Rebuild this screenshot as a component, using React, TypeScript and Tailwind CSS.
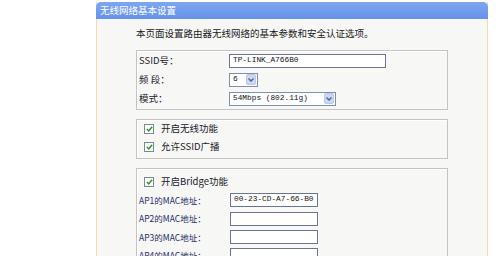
const cjk = { fontFamily: '"Noto Sans CJK SC", "Liberation Sans", sans-serif' };
const mono = { fontFamily: '"Liberation Mono", "Noto Sans CJK SC", monospace' };

function Arrow() {
  return (
    <span className="ml-auto flex h-[11px] w-[10px] items-center justify-center rounded-[2px] border border-[#b7c8ea] bg-[#c9d8f5]">
      <svg width="6" height="4" viewBox="0 0 6 4">
        <path d="M0.5 0.5 L3 3 L5.5 0.5" fill="none" stroke="#4d6185" strokeWidth="1.3" />
      </svg>
    </span>
  );
}

function Select({ value, width }: { value: string; width: string }) {
  return (
    <div className={`flex h-[14px] items-center border border-[#7f8fb0] bg-white pl-[3px] pr-[1px] ${width}`}>
      <span className="text-[7.8px] leading-none text-[#111]" style={mono}>
        {value}
      </span>
      <Arrow />
    </div>
  );
}

function TextInput({ value, width }: { value?: string; width: string }) {
  return (
    <div className={`flex h-[14px] items-center border border-[#6b7494] bg-white pl-[3px] ${width}`}>
      <span className="text-[7.8px] leading-none text-[#111]" style={mono}>
        {value}
      </span>
    </div>
  );
}

function Check({ label }: { label: string }) {
  return (
    <div className="flex h-[18px] items-center pl-[7px]">
      <span className="flex h-[10px] w-[10px] items-center justify-center border border-[#7a8a90] bg-white">
        <svg width="7" height="6" viewBox="0 0 7 6">
          <path d="M0.8 3 L2.7 4.8 L6.2 0.8" fill="none" stroke="#2f9a2f" strokeWidth="1.5" />
        </svg>
      </span>
      <span className="ml-[7px] text-[9.5px] leading-none text-[#1a1a2a]" style={cjk}>
        {label}
      </span>
    </div>
  );
}

function Row({ label, h, children }: { label: string; h: string; children: React.ReactNode }) {
  return (
    <div className={`flex items-center pl-[2px] ${h}`}>
      <span className="w-[90px] text-[9.5px] leading-none text-[#1a1a2a]" style={cjk}>
        {label}
      </span>
      {children}
    </div>
  );
}

function MacRow({ label, h, value }: { label: string; h: string; value?: string }) {
  return (
    <div className={`flex items-center pl-[2px] ${h}`}>
      <span className="w-[91px] text-[8.5px] leading-none text-[#1e2d66]" style={cjk}>
        {label}
      </span>
      <TextInput value={value} width="w-[88px]" />
    </div>
  );
}

export default function App() {
  return (
    <div className="h-[256px] w-[500px] overflow-hidden bg-white">
      <div className="ml-[96px] mt-[2px] h-[300px] w-[392px] border-x border-[#ecdcae] bg-[#f7f7f5]">
        <div className="-mx-px flex h-[17px] items-center rounded-t-[5px] bg-gradient-to-b from-[#7ea6ef] to-[#6592ea] pl-[4px]">
          <span className="text-[9.5px] leading-none text-white" style={cjk}>
            无线网络基本设置
          </span>
        </div>
        <div className="pl-[39px]">
          <div className="mt-[8px] h-[12px] text-[9.5px] leading-[12px] text-[#1a1a1a]" style={cjk}>
            本页面设置路由器无线网络的基本参数和安全认证选项。
          </div>

          <div className="mt-[11px] w-[312px] border border-[#c4c4c4] py-[1px] shadow-[inset_1px_1px_0_#ffffff]">
            <Row label="SSID号：" h="h-[18px]">
              <TextInput value="TP-LINK_A766B0" width="w-[157px]" />
            </Row>
            <Row label="频 段：" h="h-[19px]">
              <Select value="6" width="w-[29px]" />
            </Row>
            <Row label="模式：" h="h-[19px]">
              <Select value="54Mbps (802.11g)" width="w-[107px]" />
            </Row>
          </div>

          <div className="mt-[9px] w-[312px] border border-[#c4c4c4] pb-[2px] shadow-[inset_1px_1px_0_#ffffff]">
            <Check label="开启无线功能" />
            <Check label="允许SSID广播" />
          </div>

          <div className="mt-[9px] w-[312px] border border-[#c4c4c4] pt-[4px] shadow-[inset_1px_1px_0_#ffffff]">
            <Check label="开启Bridge功能" />
            <MacRow label="AP1的MAC地址：" h="h-[18px]" value="00-23-CD-A7-66-B0" />
            <MacRow label="AP2的MAC地址：" h="h-[19px]" />
            <MacRow label="AP3的MAC地址：" h="h-[18px]" />
            <MacRow label="AP4的MAC地址：" h="h-[18px]" />
          </div>
        </div>
      </div>
    </div>
  );
}
